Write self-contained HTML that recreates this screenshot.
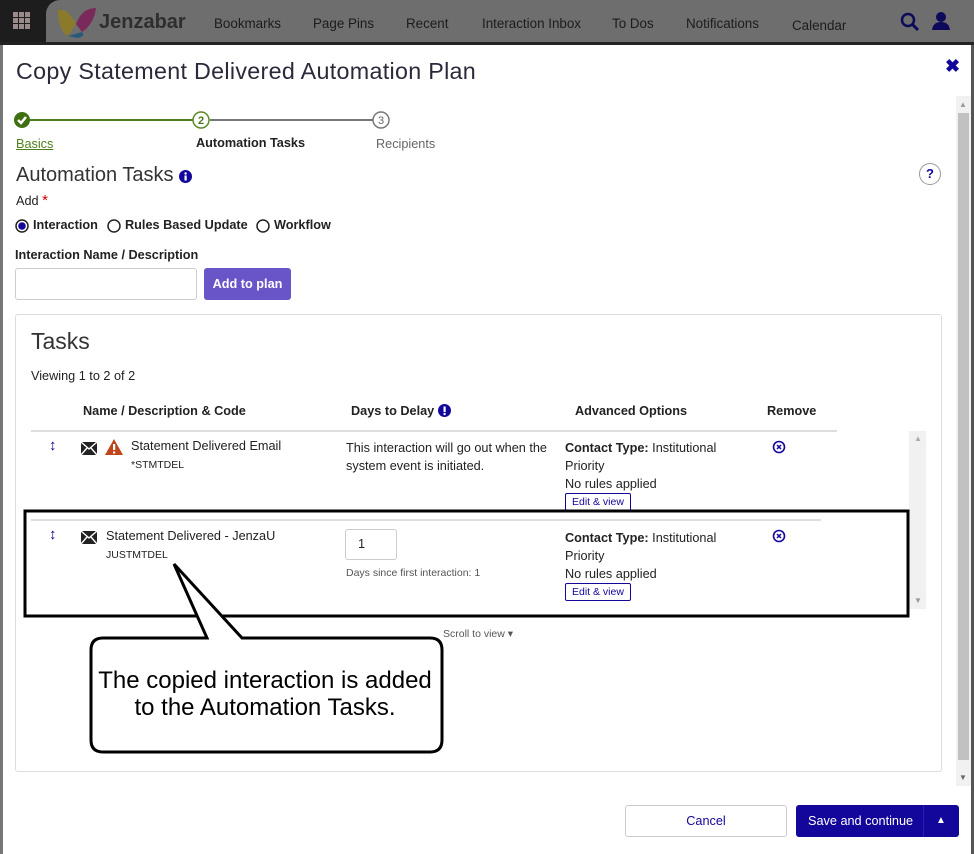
<!DOCTYPE html>
<html><head><meta charset="utf-8"><style>
*{margin:0;padding:0;box-sizing:border-box}
body{width:974px;height:854px;position:relative;overflow:hidden;background:#fff;font-family:"Liberation Sans",Arial,sans-serif;color:#222;font-size:14px}
.a{position:absolute;white-space:nowrap}
.nav{left:0;top:0;width:974px;height:45px;background:#6e6e6e;border-bottom:3px solid #222}
.navt{color:#1c1c1c;font-size:13.4px;top:16px}
.b{font-weight:bold}
.sm{font-size:10.5px}
.t{font-size:12.7px}
.btnsm{border:1px solid #13069a;border-radius:2px;font-size:10.5px;color:#13069a;padding:2px 6px;background:#fff}
</style></head><body>
<div class="a nav"></div>
<div class="a" style="left:0;top:0;width:46px;height:42px;background:#1d1d1d"></div>
<div class="a" style="left:46px;top:0;width:14px;height:14px;background:#1d1d1d"></div>
<div class="a" style="left:46px;top:0;width:28px;height:28px;background:#6e6e6e;border-top-left-radius:14px"></div>
<svg class="a" style="left:13px;top:12px" width="18" height="18"><g fill="#9b8a8a"><rect x="0" y="0" width="5" height="5"/><rect x="6" y="0" width="5" height="5"/><rect x="12" y="0" width="5" height="5"/><rect x="0" y="6" width="5" height="5"/><rect x="6" y="6" width="5" height="5"/><rect x="12" y="6" width="5" height="5"/><rect x="0" y="12" width="5" height="5"/><rect x="6" y="12" width="5" height="5"/><rect x="12" y="12" width="5" height="5"/></g></svg>
<svg class="a" style="left:56px;top:6px" width="42" height="32"><path d="M2 4 Q12 2 20 18 L12 30 Q2 24 2 4Z" fill="#8a7a2a"/><path d="M20 18 Q26 2 40 2 Q38 18 26 26Z" fill="#7a2a5a"/><path d="M12 30 L26 26 Q30 30 22 32Z" fill="#2a5a7a"/></svg>
<div class="a b" style="left:99px;top:11px;font-size:20px;color:#2e2e2e">Jenzabar</div>
<div class="a navt" style="left:214px">Bookmarks</div>
<div class="a navt" style="left:313px">Page Pins</div>
<div class="a navt" style="left:406px">Recent</div>
<div class="a navt" style="left:482px">Interaction Inbox</div>
<div class="a navt" style="left:612px">To Dos</div>
<div class="a navt" style="left:686px">Notifications</div>
<div class="a navt" style="left:792px;top:18px">Calendar</div>
<svg class="a" style="left:900px;top:12px" width="20" height="20"><circle cx="8" cy="8" r="6" fill="none" stroke="#0d0a5a" stroke-width="2.5"/><line x1="12" y1="12" x2="18" y2="18" stroke="#0d0a5a" stroke-width="3"/></svg>
<svg class="a" style="left:931px;top:11px" width="20" height="20"><circle cx="10" cy="6" r="5" fill="#0d0a5a"/><path d="M1 19 Q2 11 10 11 Q18 11 19 19Z" fill="#0d0a5a"/></svg>
<div class="a" style="left:0;top:45px;width:3px;height:809px;background:#777"></div>
<div class="a" style="left:971px;top:45px;width:3px;height:809px;background:#555"></div>
<div class="a" style="left:16px;top:58px;font-size:23.3px;color:#2a2a3a;letter-spacing:0.3px">Copy Statement Delivered Automation Plan</div>
<div class="a b" style="left:945px;top:56px;font-size:18px;color:#13069a">✖</div>
<div class="a" style="left:956px;top:96px;width:15px;height:690px;background:#f1f1f1"></div>
<div class="a" style="left:958px;top:113px;width:11px;height:647px;background:#c1c1c1"></div>
<div class="a" style="left:959px;top:100px;font-size:8px;color:#999">▲</div>
<div class="a" style="left:959px;top:773px;font-size:8px;color:#666">▼</div>
<svg class="a" style="left:12px;top:110px" width="380" height="20">
<line x1="18" y1="10" x2="182" y2="10" stroke="#4f7f1c" stroke-width="2"/>
<line x1="198" y1="10" x2="362" y2="10" stroke="#777" stroke-width="2"/>
<circle cx="10" cy="10" r="8" fill="#3f6f12"/><path d="M6 10 l3 3 l5 -6" stroke="#fff" stroke-width="2.5" fill="none"/>
<circle cx="189" cy="10" r="8" fill="#fff" stroke="#5a8a22" stroke-width="1.5"/><text x="189" y="14" font-size="11" font-weight="bold" text-anchor="middle" fill="#4a7a1a" font-family="Liberation Sans">2</text>
<circle cx="369" cy="10" r="8" fill="#fff" stroke="#777" stroke-width="1.5"/><text x="369" y="14" font-size="11" text-anchor="middle" fill="#666" font-family="Liberation Sans">3</text>
</svg>
<div class="a t" style="left:16px;top:137px;color:#4f7f1c;text-decoration:underline">Basics</div>
<div class="a b t" style="left:196px;top:136px">Automation Tasks</div>
<div class="a t" style="left:376px;top:137px;color:#666">Recipients</div>
<div class="a" style="left:16px;top:164px;font-size:20px;color:#333">Automation Tasks</div>
<svg class="a" style="left:179px;top:170px" width="13" height="13"><circle cx="6.5" cy="6.5" r="6.5" fill="#13069a"/><rect x="5.5" y="5.5" width="2.2" height="5" fill="#fff"/><circle cx="6.6" cy="3.5" r="1.2" fill="#fff"/></svg>
<div class="a" style="left:919px;top:163px;width:22px;height:22px;border:1px solid #999;border-radius:50%;text-align:center;font-weight:bold;font-size:13px;line-height:20px;color:#13069a">?</div>
<div class="a t" style="left:16px;top:192px">Add <span style="color:#c00;font-size:15px">*</span></div>
<svg class="a" style="left:15px;top:219px" width="14" height="14"><circle cx="7" cy="7" r="6" fill="#fff" stroke="#222" stroke-width="1.5"/><circle cx="7" cy="7" r="3.8" fill="#13069a"/></svg>
<div class="a b t" style="left:33px;top:218px">Interaction</div>
<svg class="a" style="left:107px;top:219px" width="14" height="14"><circle cx="7" cy="7" r="6" fill="#fff" stroke="#222" stroke-width="1.5"/></svg>
<div class="a b t" style="left:125px;top:218px">Rules Based Update</div>
<svg class="a" style="left:256px;top:219px" width="14" height="14"><circle cx="7" cy="7" r="6" fill="#fff" stroke="#222" stroke-width="1.5"/></svg>
<div class="a b t" style="left:274px;top:218px">Workflow</div>
<div class="a b t" style="left:15px;top:248px">Interaction Name / Description</div>
<div class="a" style="left:15px;top:268px;width:182px;height:32px;border:1px solid #ccc;border-radius:3px"></div>
<div class="a b t" style="left:204px;top:268px;width:87px;height:32px;background:#6a55c8;color:#fff;border-radius:3px;text-align:center;line-height:32px">Add to plan</div>
<div class="a" style="left:15px;top:314px;width:927px;height:458px;border:1px solid #ddd;border-radius:3px"></div>
<div class="a" style="left:31px;top:328px;font-size:23px;color:#333">Tasks</div>
<div class="a t" style="left:31px;top:369px">Viewing 1 to 2 of 2</div>
<div class="a b t" style="left:83px;top:404px">Name / Description &amp; Code</div>
<div class="a b t" style="left:351px;top:404px">Days to Delay</div>
<svg class="a" style="left:438px;top:404px" width="13" height="13"><circle cx="6.5" cy="6.5" r="6.5" fill="#13069a"/><rect x="5.5" y="2.5" width="2.2" height="5.5" fill="#fff"/><circle cx="6.6" cy="10" r="1.2" fill="#fff"/></svg>
<div class="a b t" style="left:575px;top:404px">Advanced Options</div>
<div class="a b t" style="left:767px;top:404px">Remove</div>
<div class="a" style="left:31px;top:430px;width:806px;height:2px;background:#ddd"></div>
<div class="a" style="left:909px;top:431px;width:17px;height:178px;background:#f1f1f1"></div>
<div class="a" style="left:914px;top:434px;font-size:8px;color:#aaa">▲</div>
<div class="a" style="left:914px;top:596px;font-size:8px;color:#999">▼</div>
<!-- row1 -->
<div class="a b" style="left:49px;top:437px;color:#13069a;font-size:15px">↕</div>
<svg class="a" style="left:81px;top:442px" width="16" height="13"><rect width="16" height="13" fill="#222"/><path d="M0 0 L8 7 L16 0 M0 13 L6 6 M16 13 L10 6" stroke="#fff" stroke-width="1.4" fill="none"/></svg>
<svg class="a" style="left:104px;top:438px" width="20" height="18"><path d="M10 1 L19 17 L1 17Z" fill="#c0451a"/><rect x="9" y="6" width="2.2" height="6" fill="#fff"/><rect x="9" y="13.5" width="2.2" height="2" fill="#fff"/></svg>
<div class="a t" style="left:131px;top:439px">Statement Delivered Email</div>
<div class="a sm" style="left:131px;top:459px">*STMTDEL</div>
<div class="a t" style="left:346px;top:439px;line-height:18px;white-space:normal;width:210px">This interaction will go out when the system event is initiated.</div>
<div class="a t" style="left:565px;top:439px;line-height:18px"><b>Contact Type:</b> Institutional<br>Priority<br>No rules applied</div>
<div class="a btnsm" style="left:565px;top:493px">Edit &amp; view</div>
<svg class="a" style="left:772px;top:440px" width="14" height="14"><circle cx="7" cy="7" r="5.5" fill="none" stroke="#13069a" stroke-width="1.6"/><path d="M5 5 L9 9 M9 5 L5 9" stroke="#13069a" stroke-width="1.5"/></svg>
<div class="a" style="left:31px;top:519px;width:790px;height:2px;background:#ddd"></div>
<!-- row2 -->
<div class="a b" style="left:49px;top:526px;color:#13069a;font-size:15px">↕</div>
<svg class="a" style="left:81px;top:531px" width="16" height="13"><rect width="16" height="13" fill="#222"/><path d="M0 0 L8 7 L16 0 M0 13 L6 6 M16 13 L10 6" stroke="#fff" stroke-width="1.4" fill="none"/></svg>
<div class="a t" style="left:106px;top:529px">Statement Delivered - JenzaU</div>
<div class="a sm" style="left:106px;top:549px">JUSTMTDEL</div>
<div class="a t" style="left:345px;top:529px;width:52px;height:31px;border:1px solid #ccc;border-radius:3px;padding:7px 0 0 12px">1</div>
<div class="a sm" style="left:346px;top:567px;color:#555">Days since first interaction: 1</div>
<div class="a t" style="left:565px;top:529px;line-height:18px"><b>Contact Type:</b> Institutional<br>Priority<br>No rules applied</div>
<div class="a btnsm" style="left:565px;top:583px">Edit &amp; view</div>
<svg class="a" style="left:772px;top:529px" width="14" height="14"><circle cx="7" cy="7" r="5.5" fill="none" stroke="#13069a" stroke-width="1.6"/><path d="M5 5 L9 9 M9 5 L5 9" stroke="#13069a" stroke-width="1.5"/></svg>
<div class="a sm" style="left:443px;top:628px;color:#555">Scroll to view ▾</div>
<svg class="a" style="left:0;top:0" width="974" height="854">
<rect x="25" y="511" width="883" height="105" fill="none" stroke="#000" stroke-width="3"/>
<path d="M103 638 L207 638 L174 564 L242 638 L430 638 Q442 638 442 650 L442 740 Q442 752 430 752 L103 752 Q91 752 91 740 L91 650 Q91 638 103 638Z" fill="#fff" stroke="#000" stroke-width="3" stroke-linejoin="miter"/>
<text x="265" y="688" font-size="24" text-anchor="middle" font-family="Liberation Sans" fill="#000">The copied interaction is added</text>
<text x="265" y="715" font-size="24" text-anchor="middle" font-family="Liberation Sans" fill="#000">to the Automation Tasks.</text>
</svg>
<div class="a t" style="left:625px;top:805px;width:162px;height:32px;border:1px solid #ccc;border-radius:3px;text-align:center;line-height:30px;color:#13069a">Cancel</div>
<div class="a t" style="left:796px;top:805px;width:163px;height:32px;background:#13069a;border-radius:3px;color:#fff;line-height:32px">
<span style="position:absolute;left:12px">Save and continue</span>
<span style="position:absolute;left:127px;top:0;width:1px;height:32px;background:#2a1fb0"></span>
<span style="position:absolute;left:140px;font-size:10px">▲</span></div>
</body></html>
